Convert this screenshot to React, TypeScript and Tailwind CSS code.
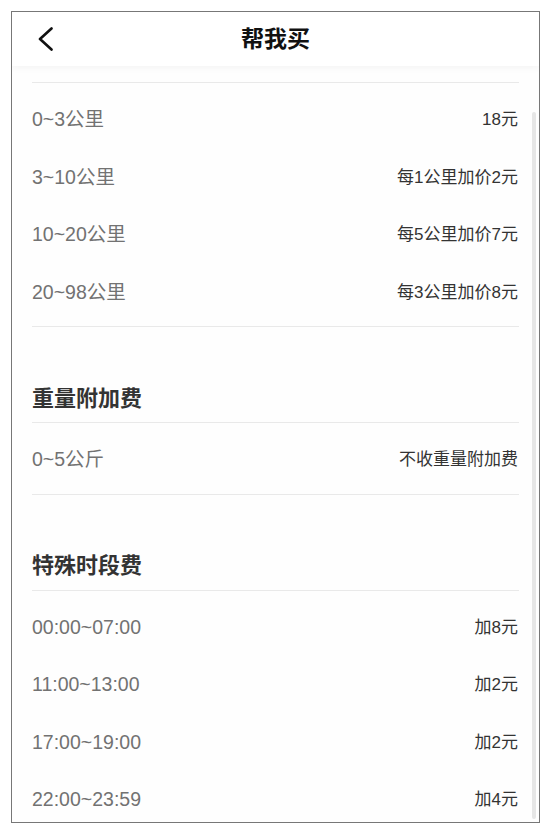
import React from "react";

const font = { fontFamily: '"Liberation Sans", "Noto Sans CJK SC", sans-serif' };

function Row({ left, right }: { left: string; right: string }) {
  return (
    <div className="flex h-[57.5px] items-center justify-between">
      <span className="text-[19.5px] text-[#727272]">{left}</span>
      <span className="mr-[1px] text-[17px] text-[#333333]">{right}</span>
    </div>
  );
}

function Divider() {
  return <div className="h-px bg-[#e9e9e9]" />;
}

function Section({ title, rows }: { title?: string; rows: [string, string][] }) {
  return (
    <div>
      {title && (
        <div className="mt-[57px] mb-[10px] flex h-[28px] items-center text-[22px] font-semibold text-[#333333]">
          {title}
        </div>
      )}
      <Divider />
      <div className="pt-[8px] pb-[5px]">
        {rows.map(([l, r]) => (
          <Row key={l} left={l} right={r} />
        ))}
      </div>
      <Divider />
    </div>
  );
}

export default function App() {
  return (
    <div className="h-[834px] w-[550px] bg-white pl-[11px] pt-[11px]" style={font}>
      <div className="relative flex h-[812px] w-[529px] flex-col overflow-hidden border border-[#777777] bg-[#fefefe]">
        <div className="relative z-10 flex h-[54px] shrink-0 items-center justify-between bg-white px-[20px] shadow-[0_3px_6px_rgba(0,0,0,0.035)]">
          <div className="flex w-[40px] items-center">
            <svg width="16" height="24" viewBox="0 0 16 24" className="ml-[6px]">
              <polyline
                points="13.5,1.5 2,12 13.5,22.5"
                fill="none"
                stroke="#111"
                strokeWidth="2.6"
                strokeLinecap="round"
                strokeLinejoin="round"
              />
            </svg>
          </div>
          <div className="text-[23px] font-semibold text-[#111111]">帮我买</div>
          <div className="w-[40px]" />
        </div>
        <div className="flex-1 px-[20px] pt-[16px]">
          <Section
            rows={[
              ["0~3公里", "18元"],
              ["3~10公里", "每1公里加价2元"],
              ["10~20公里", "每5公里加价7元"],
              ["20~98公里", "每3公里加价8元"],
            ]}
          />
          <Section title="重量附加费" rows={[["0~5公斤", "不收重量附加费"]]} />
          <Section
            title="特殊时段费"
            rows={[
              ["00:00~07:00", "加8元"],
              ["11:00~13:00", "加2元"],
              ["17:00~19:00", "加2元"],
              ["22:00~23:59", "加4元"],
            ]}
          />
        </div>
        <div className="absolute right-[3px] top-[100px] bottom-[3px] w-[4px] rounded-full bg-[#e6e6e6]" />
      </div>
    </div>
  );
}
